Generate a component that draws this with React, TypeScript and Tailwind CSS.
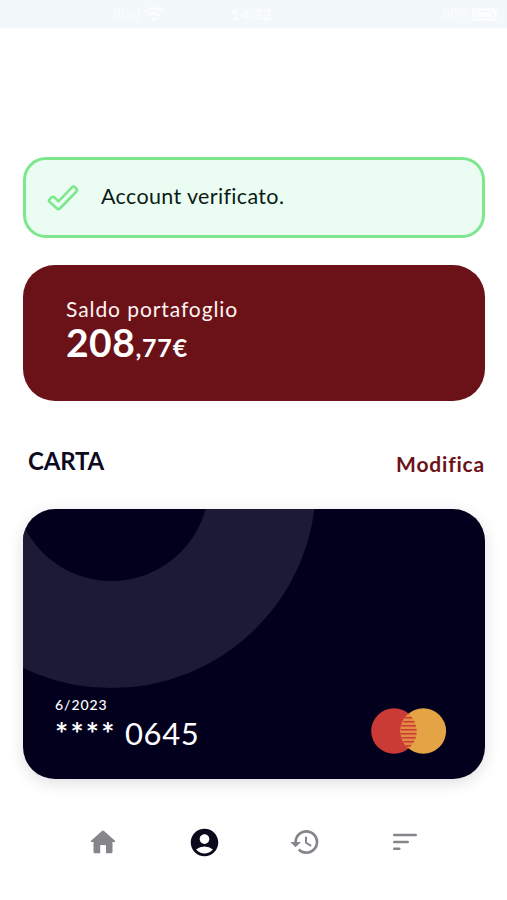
import { MdAccountCircle, MdHistory } from 'react-icons/md';
import { FaWifi, FaBatteryFull } from 'react-icons/fa';

function StatusBar() {
  return (
    <div className="grid h-7 grid-cols-3 items-center bg-[#f3f8fb] px-2.5 text-[13px] text-[#fbfdfe]">
      <div className="flex items-center justify-end gap-1 pr-2">
        <span className="text-[15px]">Iliad</span>
        <FaWifi size={20} />
      </div>
      <span className="pr-1 text-center text-[16px] font-bold">14:32</span>
      <div className="flex items-center justify-end gap-1">
        <span>88%</span>
        <FaBatteryFull size={25} />
      </div>
    </div>
  );
}

function VerifiedBanner() {
  return (
    <div className="flex h-[81px] items-center rounded-[23px] border-3 border-[#7de78e] bg-[#ebfcf2] pl-[21px]">
      <svg width="32" height="28" viewBox="0 0 32 28" fill="none" stroke="#7de78e" strokeWidth="2.6" strokeLinejoin="round">
        <path d="M2.6 15.4 L4.8 13.2 Q6 12.2 7.3 13.3 L11.4 17.4 L25.2 3.2 Q26.6 1.8 27.9 3.1 L29.5 4.9 Q30.6 6.2 29.5 7.5 L12.8 24.5 Q11.4 25.7 10 24.5 L2.6 17.9 Q1.4 16.7 2.6 15.4 Z" />
      </svg>
      <span className="ml-[22px] pb-[3px] text-[21.5px] tracking-[0.35px] text-[#0c1b16]">Account verificato.</span>
    </div>
  );
}

function Wallet() {
  return (
    <div className="mt-[27px] flex h-[136px] flex-col rounded-[32px] bg-[#6b1219] pt-[31px] pl-[43px] text-[#fff4f2]">
      <span className="text-[21px] leading-[26px] tracking-[0.92px]">Saldo portafoglio</span>
      <div className="-mt-px font-bold leading-[42px] text-white">
        <span className="text-[39px] tracking-[0.5px]">208</span>
        <span className="text-[25px] tracking-[0.8px]">,77€</span>
      </div>
    </div>
  );
}

function MastercardLogo() {
  return (
    <svg width="76" height="46" viewBox="0 0 76 46">
      <circle cx="23" cy="23" r="22.8" fill="#c93b34" />
      <circle cx="52.3" cy="23" r="22.8" fill="#e4a445" />
      <path d="M37.6 5.5 A22.8 22.8 0 0 1 37.6 40.5 A22.8 22.8 0 0 1 37.6 5.5 Z" fill="#e38a43" />
      <path
        d="M34 9.8 H41 M32 13.8 H43.5 M30.4 17.8 H44.8 M29.7 21.8 H45.6 M29.8 25.8 H45.5 M30.7 29.8 H44.7 M32.5 33.8 H43 M35 37.8 H40"
        stroke="#c93b34"
        strokeWidth="1.5"
      />
    </svg>
  );
}

function CreditCard() {
  return (
    <div className="relative h-[270px] rounded-[32px] bg-[#03001e] shadow-[0_4px_16px_rgba(0,0,0,0.13)]">
      <div className="absolute inset-0 overflow-hidden rounded-[32px]">
        <div className="absolute -top-[230px] -left-[116px] size-[409px] rounded-full border-[107px] border-[#1d1a35]" />
      </div>
      <div className="relative flex h-full items-end justify-between pr-[38px] pb-[25px] pl-[32px] text-white">
        <div className="flex flex-col pb-[2px]">
          <span className="text-[14px] leading-[18px] font-medium tracking-[0.95px]">6/2023</span>
          <div className="flex text-[31px] leading-[38px]">
            <span className="w-[70px] font-bold tracking-[2.2px]">****</span>
            <span className="tracking-[0.6px]">0645</span>
          </div>
        </div>
        <MastercardLogo />
      </div>
    </div>
  );
}

function BottomNav() {
  return (
    <nav className="mt-[46px] flex h-[34px] items-center pr-[51px] pl-[51px] text-[#85858b]">
      <div className="flex flex-1 justify-center pl-0.5">
        <svg width="26" height="24" viewBox="0 0 26 24" fill="currentColor">
          <path d="M12 .9 Q13 0 14 .9 L25 10.7 Q25.8 12 24.5 12.1 H22.5 V21.7 Q22.5 23.2 21 23.2 H16 V15.8 Q16 15 15.2 15 H11 Q10.2 15 10.2 15.8 V23.2 H5 Q3.5 23.2 3.5 21.7 V12.1 H1.5 Q.2 12 1 10.7 Z" />
        </svg>
      </div>
      <div className="flex flex-1 justify-center pl-px">
        <MdAccountCircle size={33} className="text-[#0d091d]" />
      </div>
      <div className="flex flex-1 justify-center pl-px">
        <MdHistory size={32} />
      </div>
      <div className="flex flex-1 justify-center pr-px">
        <svg width="24" height="18" viewBox="0 0 24 18" fill="none" stroke="currentColor" strokeWidth="2.6" strokeLinecap="round">
          <path d="M1.3 2 H22.7 M1.3 9 H14.7 M1.3 15.7 H6.3" />
        </svg>
      </div>
    </nav>
  );
}

export default function App() {
  return (
    <div className="h-[900px] w-[507px] overflow-hidden bg-white font-['Lato',sans-serif]">
      <StatusBar />
      <main className="pt-[129px] pr-[22px] pl-[23px]">
        <VerifiedBanner />
        <Wallet />
        <div className="flex h-[108px] justify-between pl-[5px]">
          <h2 className="pt-[44px] text-[24px] leading-[32px] font-bold tracking-[-0.2px] text-[#0d0a1f]">CARTA</h2>
          <a className="pt-[47px] text-[21px] leading-[32px] font-bold tracking-[0.8px] text-[#6b1219]">Modifica</a>
        </div>
        <CreditCard />
      </main>
      <BottomNav />
    </div>
  );
}
